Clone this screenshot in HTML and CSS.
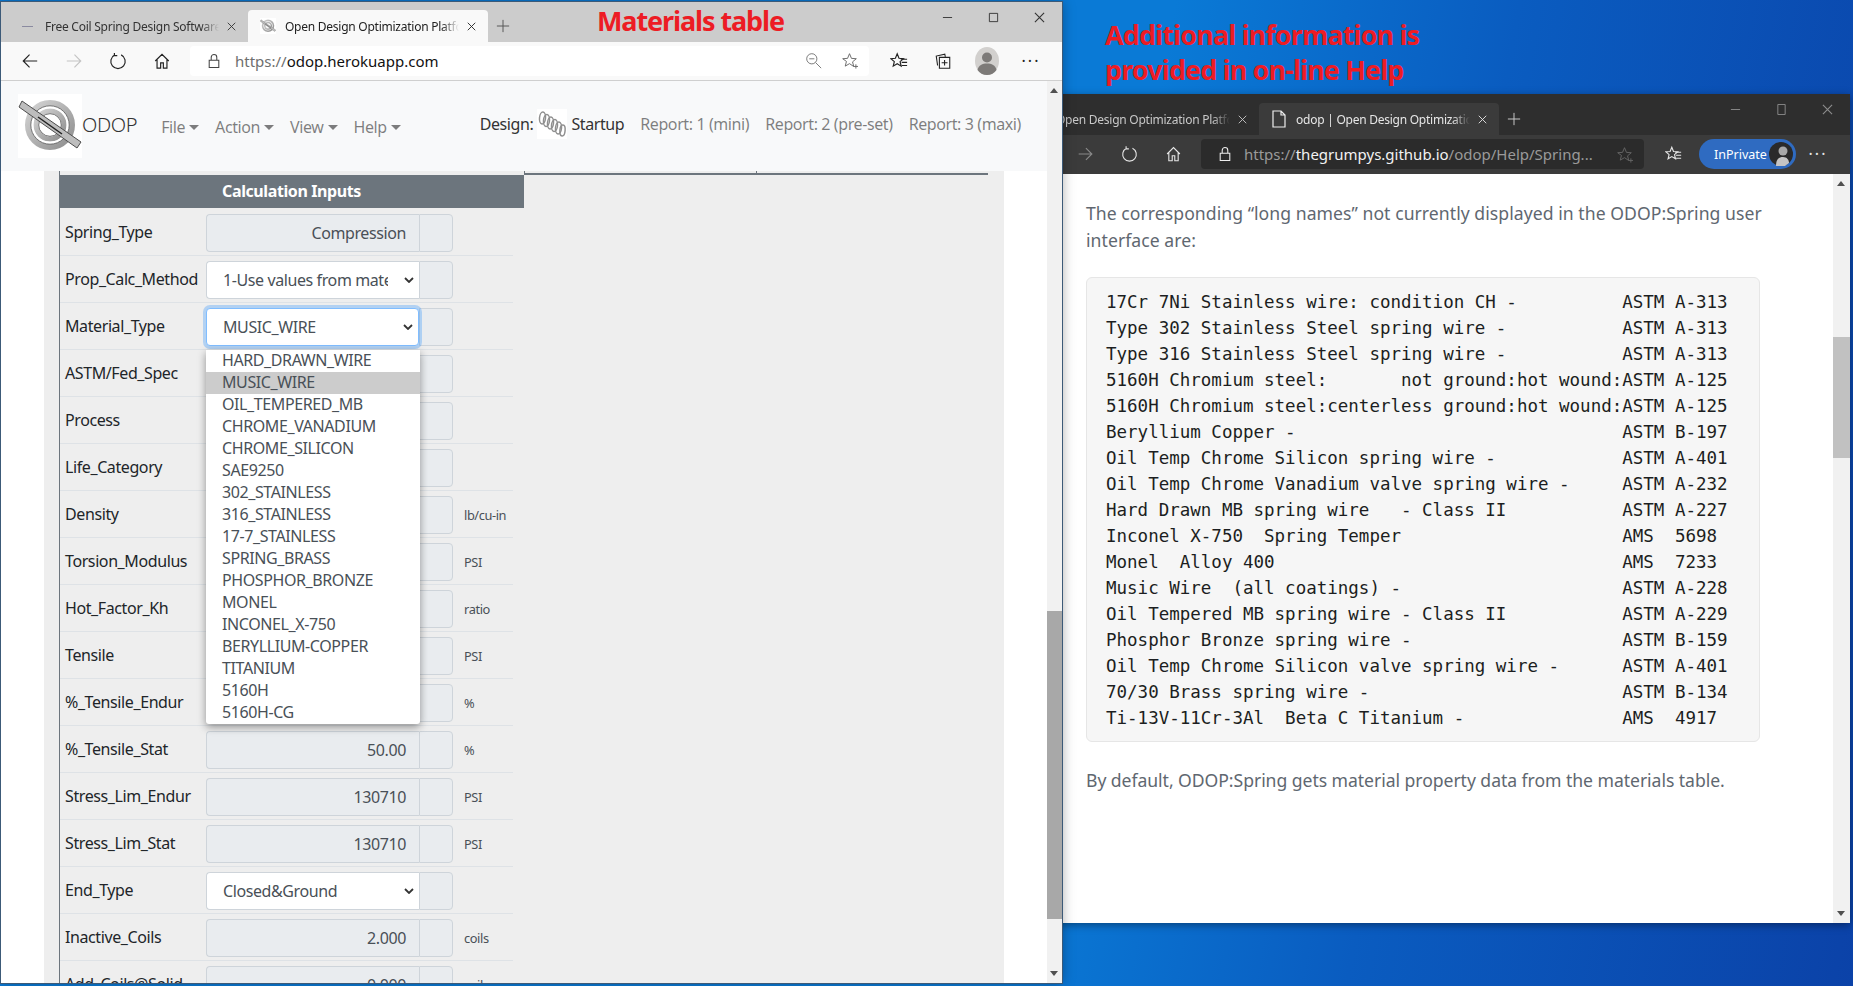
FILE: index.html
```html
<!DOCTYPE html>
<html lang="en">
<head>
  <meta charset="UTF-8">
  <title>Materials table</title>
  <link rel="stylesheet" href="styles.css">
</head>
<body>
  <svg class="sprite" width="0" height="0">
    <defs>
      <linearGradient id="ring" x1="0" y1="0" x2="1" y2="1">
        <stop offset="0" stop-color="#d4d4d4"/>
        <stop offset="1" stop-color="#8e8e8e"/>
      </linearGradient>
    </defs>
    <symbol id="i-back" viewBox="0 0 20 20"><path d="M18 10H2.5M9.5 3l-7 7 7 7" fill="none" stroke="currentColor" stroke-width="1.3"/></symbol>
    <symbol id="i-reload" viewBox="0 0 20 20"><path d="M6.5 3.2A8 8 0 1 0 13.5 3.2M6 1v3h3.2" fill="none" stroke="currentColor" stroke-width="1.3"/></symbol>
    <symbol id="i-home" viewBox="0 0 20 20"><path d="M2.5 10L10 2.5l7.500 7.500M4.500 8.500V18h4v-6h3v6h4V8.500" fill="none" stroke="currentColor" stroke-width="1.3"/></symbol>
    <symbol id="i-lock" viewBox="0 0 20 20"><path d="M4 9h12v9H4zM6.500 9V5.500a3.500 3.500 0 0 1 7 0V9" fill="none" stroke="currentColor" stroke-width="1.3"/></symbol>
    <symbol id="i-star" viewBox="0 0 20 20"><path d="M10 2l2.300 5.500 5.700.4-4.400 3.700 1.400 5.500L10 13.700 5 16.600l1.400-5.500L2 7.900l5.700-.4z" fill="none" stroke="currentColor" stroke-width="1.100"/><path d="M15 17h5M17.500 14.500v5" stroke="currentColor" stroke-width="1.100"/></symbol>
    <symbol id="i-favs" viewBox="0 0 20 20"><path d="M8 2l2 5 5 .4-3.800 3.300 1.200 5L8 13l-4.400 2.700 1.200-5L1 7.400 6 7z" fill="none" stroke="currentColor" stroke-width="1.300"/><path d="M12 8h7M13 11.500h6M13 15h6" stroke="currentColor" stroke-width="1.200"/></symbol>
    <symbol id="i-coll" viewBox="0 0 20 20"><path d="M4 15L2.500 4.500 12 2.500l.6 3" fill="none" stroke="currentColor" stroke-width="1.200"/><path d="M6 6h11.500v12H6zM11.750 9v6M8.500 12H15" fill="none" stroke="currentColor" stroke-width="1.200"/></symbol>
    <symbol id="i-zoom" viewBox="0 0 20 20"><circle cx="8" cy="8" r="6" fill="none" stroke="currentColor" stroke-width="1"/><path d="M12.500 12.500L19 19M5 8h6" stroke="currentColor" stroke-width="1"/></symbol>
    <symbol id="i-close" viewBox="0 0 12 12"><path d="M1 1l10 10M11 1L1 11" stroke="currentColor" stroke-width="1.200"/></symbol>
    <symbol id="i-plus" viewBox="0 0 16 16"><path d="M8 1v14M1 8h14" stroke="currentColor" stroke-width="1.100"/></symbol>
    <symbol id="i-chevron" viewBox="0 0 10 6"><path d="M1 1l4 4 4-4" fill="none" stroke="currentColor" stroke-width="1.800"/></symbol>
    <symbol id="i-coil" viewBox="0 0 30 30">
      <g fill="none" stroke="#8f8f8f" stroke-width="1.500">
        <ellipse cx="5.500" cy="9" rx="3" ry="6" transform="rotate(5 5.500 9)"/>
        <ellipse cx="9.500" cy="11.500" rx="3" ry="6" transform="rotate(5 9.500 11.500)"/>
        <ellipse cx="13.500" cy="14" rx="3" ry="6" transform="rotate(5 13.500 14)"/>
        <ellipse cx="17.500" cy="16.500" rx="3" ry="6" transform="rotate(5 17.500 16.500)"/>
        <ellipse cx="21.500" cy="19" rx="3" ry="6" transform="rotate(5 21.500 19)"/>
        <ellipse cx="25.500" cy="21.500" rx="2.600" ry="5.500" transform="rotate(5 25.500 21.500)"/>
      </g>
    </symbol>
    <symbol id="i-logo" viewBox="0 0 64 64">
      <rect width="64" height="64" fill="#fff"/>
      <circle cx="32" cy="31" r="22" fill="none" stroke="url(#ring)" stroke-width="6"/>
      <circle cx="32" cy="31" r="14" fill="none" stroke="url(#ring)" stroke-width="5"/>
      <circle cx="32" cy="31" r="18" fill="none" stroke="#fff" stroke-width="2.500"/>
      <circle cx="32" cy="31" r="19.200" fill="none" stroke="#555" stroke-width=".8"/>
      <circle cx="32" cy="31" r="11.300" fill="none" stroke="#555" stroke-width=".8"/>
      <path d="M4 7l59 41-4 6L1 13z" fill="#bdbdbd" stroke="#4d4d4d" stroke-width="1"/>
      <path d="M20 23l24 17" stroke="#222" stroke-width="1.500"/>
    </symbol>
  </svg>

  <div class="desktop">
    <div class="note note-table">Materials table</div>
    <div class="note note-help">Additional information is<br>provided in on-line Help</div>

    <!-- help window, sits behind the app window -->
    <div class="win win-help">
      <div class="tabstrip">
        <div class="tab">
          <span class="tab-icon"></span>
          <span class="tab-title">Open Design Optimization Platform</span>
          <svg class="tab-close"><use href="#i-close"/></svg>
        </div>
        <div class="tab tab-active">
          <svg class="tab-icon doc-icon" viewBox="0 0 14 18"><path d="M1 1h8l4 4v12H1zM9 1v4h4" fill="none" stroke="currentColor" stroke-width="1.200"/></svg>
          <span class="tab-title">odop | Open Design Optimization Platform</span>
          <svg class="tab-close"><use href="#i-close"/></svg>
        </div>
        <svg class="tab-plus"><use href="#i-plus"/></svg>
        <div class="win-controls">
          <span class="ctl"><svg viewBox="0 0 12 12"><path d="M1 6h10" stroke="currentColor"/></svg></span>
          <span class="ctl"><svg viewBox="0 0 12 12"><path d="M2 .5h8v11H2z" fill="none" stroke="currentColor"/></svg></span>
          <span class="ctl"><svg viewBox="0 0 12 12"><use href="#i-close"/></svg></span>
        </div>
      </div>
      <div class="toolbar">
        <span class="slot"><svg class="flip"><use href="#i-back"/></svg></span>
        <span class="slot dim"><svg class="flip"><use href="#i-back"/></svg></span>
        <span class="slot"><svg><use href="#i-reload"/></svg></span>
        <span class="slot"><svg><use href="#i-home"/></svg></span>
        <div class="address">
          <svg class="lock"><use href="#i-lock"/></svg>
          <span class="url"><i>https://</i>thegrumpys.github.io<i>/odop/Help/Spring...</i></span>
          <svg class="addr-icon"><use href="#i-star"/></svg>
        </div>
        <span class="slot"><svg><use href="#i-favs"/></svg></span>
        <div class="inprivate">
          <span>InPrivate</span>
          <svg class="avatar" viewBox="0 0 24 24">
            <circle cx="12" cy="12" r="12" fill="#2a2a2a"/>
            <circle cx="14" cy="9" r="4.500" fill="#a8a8a8"/>
            <path d="M7 24c0-7 3-9 7-9s6 3 6 6l-4 3z" fill="#c4c4c4"/>
          </svg>
        </div>
        <span class="slot more">···</span>
      </div>
      <div class="viewport">
        <div class="help-page">
          <p class="before-code">The corresponding “long names” not currently displayed in the ODOP:Spring user interface are:</p>
          <pre class="code">17Cr 7Ni Stainless wire: condition CH -          ASTM A-313
Type 302 Stainless Steel spring wire -           ASTM A-313
Type 316 Stainless Steel spring wire -           ASTM A-313
5160H Chromium steel:       not ground:hot wound:ASTM A-125
5160H Chromium steel:centerless ground:hot wound:ASTM A-125
Beryllium Copper -                               ASTM B-197
Oil Temp Chrome Silicon spring wire -            ASTM A-401
Oil Temp Chrome Vanadium valve spring wire -     ASTM A-232
Hard Drawn MB spring wire   - Class II           ASTM A-227
Inconel X-750  Spring Temper                     AMS  5698
Monel  Alloy 400                                 AMS  7233
Music Wire  (all coatings) -                     ASTM A-228
Oil Tempered MB spring wire - Class II           ASTM A-229
Phosphor Bronze spring wire -                    ASTM B-159
Oil Temp Chrome Silicon valve spring wire -      ASTM A-401
70/30 Brass spring wire -                        ASTM B-134
Ti-13V-11Cr-3Al  Beta C Titanium -               AMS  4917</pre>
          <p class="after-code">By default, ODOP:Spring gets material property data from the materials table.</p>
        </div>
        <div class="scrollbar scrollbar-help"><div class="thumb"></div></div>
      </div>
    </div>

    <!-- app window -->
    <div class="win win-app">
      <div class="tabstrip">
        <div class="tab">
          <span class="tab-icon"><span class="dash"></span></span>
          <span class="tab-title">Free Coil Spring Design Software</span>
          <svg class="tab-close"><use href="#i-close"/></svg>
        </div>
        <div class="tab tab-active">
          <svg class="tab-icon"><use href="#i-logo"/></svg>
          <span class="tab-title">Open Design Optimization Platform</span>
          <svg class="tab-close"><use href="#i-close"/></svg>
        </div>
        <svg class="tab-plus"><use href="#i-plus"/></svg>
        <div class="win-controls">
          <span class="ctl"><svg viewBox="0 0 12 12"><path d="M1 6h10" stroke="currentColor"/></svg></span>
          <span class="ctl"><svg viewBox="0 0 12 12"><path d="M1.500 1.500h9v9h-9z" fill="none" stroke="currentColor"/></svg></span>
          <span class="ctl"><svg viewBox="0 0 12 12"><use href="#i-close"/></svg></span>
        </div>
      </div>
      <div class="toolbar">
        <span class="slot"><svg><use href="#i-back"/></svg></span>
        <span class="slot dim"><svg class="flip"><use href="#i-back"/></svg></span>
        <span class="slot"><svg><use href="#i-reload"/></svg></span>
        <span class="slot"><svg><use href="#i-home"/></svg></span>
        <div class="address">
          <svg class="lock"><use href="#i-lock"/></svg>
          <span class="url"><i>https://</i>odop.herokuapp.com</span>
          <svg class="addr-icon addr-zoom"><use href="#i-zoom"/></svg>
          <svg class="addr-icon"><use href="#i-star"/></svg>
        </div>
        <span class="slot"><svg><use href="#i-favs"/></svg></span>
        <span class="slot"><svg><use href="#i-coll"/></svg></span>
        <span class="slot">
          <svg class="profile" viewBox="0 0 24 28">
            <ellipse cx="12" cy="14" rx="12" ry="14" fill="#d2d0ce"/>
            <circle cx="12" cy="10.500" r="5" fill="#7d7a78"/>
            <path d="M2.500 23c1-5 5-6.500 9.500-6.500s8.500 1.500 9.500 6.500c-2 3-5.500 5-9.500 5s-7.500-2-9.500-5z" fill="#7d7a78"/>
          </svg>
        </span>
        <span class="slot more">···</span>
      </div>
      <div class="viewport">
        <div class="app-page">
          <nav class="navbar">
            <svg class="logo"><use href="#i-logo"/></svg>
            <span class="brand">ODOP</span>
            <div class="nav-menus">
              <span class="nav-link caret">File</span>
              <span class="nav-link caret">Action</span>
              <span class="nav-link caret">View</span>
              <span class="nav-link caret">Help</span>
            </div>
            <div class="nav-right">
              <span class="design">Design:</span>
              <svg class="coil"><use href="#i-coil"/></svg>
              <span class="design">Startup</span>
              <span class="nav-link report report-first">Report: 1 (mini)</span>
              <span class="nav-link report">Report: 2 (pre-set)</span>
              <span class="nav-link report">Report: 3 (maxi)</span>
            </div>
          </nav>
          <div class="content">
            <div class="panels">
              <div class="inputs">
                <div class="inputs-head">Calculation Inputs</div>
                <div class="row"><span class="name">Spring_Type</span><div class="group"><div class="field ro">Compression</div><div class="append"></div></div></div>
                <div class="row"><span class="name">Prop_Calc_Method</span><div class="group"><div class="field sel"><span class="sel-text">1-Use values from material table</span><svg class="chev"><use href="#i-chevron"/></svg></div><div class="append"></div></div></div>
                <div class="row row-open"><span class="name">Material_Type</span><div class="group"><div class="field sel focus"><span class="sel-text">MUSIC_WIRE</span><svg class="chev"><use href="#i-chevron"/></svg></div><div class="append"></div></div>
                  <ul class="dropdown">
                    <li>HARD_DRAWN_WIRE</li>
                    <li class="picked">MUSIC_WIRE</li>
                    <li>OIL_TEMPERED_MB</li>
                    <li>CHROME_VANADIUM</li>
                    <li>CHROME_SILICON</li>
                    <li>SAE9250</li>
                    <li>302_STAINLESS</li>
                    <li>316_STAINLESS</li>
                    <li>17-7_STAINLESS</li>
                    <li>SPRING_BRASS</li>
                    <li>PHOSPHOR_BRONZE</li>
                    <li>MONEL</li>
                    <li>INCONEL_X-750</li>
                    <li>BERYLLIUM-COPPER</li>
                    <li>TITANIUM</li>
                    <li>5160H</li>
                    <li>5160H-CG</li>
                  </ul>
                </div>
                <div class="row"><span class="name">ASTM/Fed_Spec</span><div class="group"><div class="field ro"></div><div class="append"></div></div></div>
                <div class="row"><span class="name">Process</span><div class="group"><div class="field ro"></div><div class="append"></div></div></div>
                <div class="row"><span class="name">Life_Category</span><div class="group"><div class="field ro"></div><div class="append"></div></div></div>
                <div class="row"><span class="name">Density</span><div class="group"><div class="field ro"></div><div class="append"></div></div><span class="unit">lb/cu-in</span></div>
                <div class="row"><span class="name">Torsion_Modulus</span><div class="group"><div class="field ro"></div><div class="append"></div></div><span class="unit">PSI</span></div>
                <div class="row"><span class="name">Hot_Factor_Kh</span><div class="group"><div class="field ro"></div><div class="append"></div></div><span class="unit">ratio</span></div>
                <div class="row"><span class="name">Tensile</span><div class="group"><div class="field ro"></div><div class="append"></div></div><span class="unit">PSI</span></div>
                <div class="row"><span class="name">%_Tensile_Endur</span><div class="group"><div class="field ro"></div><div class="append"></div></div><span class="unit">%</span></div>
                <div class="row"><span class="name">%_Tensile_Stat</span><div class="group"><div class="field ro">50.00</div><div class="append"></div></div><span class="unit">%</span></div>
                <div class="row"><span class="name">Stress_Lim_Endur</span><div class="group"><div class="field ro">130710</div><div class="append"></div></div><span class="unit">PSI</span></div>
                <div class="row"><span class="name">Stress_Lim_Stat</span><div class="group"><div class="field ro">130710</div><div class="append"></div></div><span class="unit">PSI</span></div>
                <div class="row"><span class="name">End_Type</span><div class="group"><div class="field sel"><span class="sel-text">Closed&amp;Ground</span><svg class="chev"><use href="#i-chevron"/></svg></div><div class="append"></div></div></div>
                <div class="row"><span class="name">Inactive_Coils</span><div class="group"><div class="field ro">2.000</div><div class="append"></div></div><span class="unit">coils</span></div>
                <div class="row"><span class="name">Add_Coils@Solid</span><div class="group"><div class="field ro">0.000</div><div class="append"></div></div><span class="unit">coils</span></div>
              </div>
              <div class="panel-tops">
                <div class="panel-top"></div>
                <div class="panel-top"></div>
              </div>
            </div>
          </div>
        </div>
        <div class="scrollbar scrollbar-app"><div class="thumb"></div></div>
      </div>
    </div>
  </div>
</body>
</html>
```

FILE: styles.css
```css
* {
  box-sizing: border-box;
}
html, body {
  margin: 0;
  height: 100%;
  overflow: hidden;
}
body {
  font-family: "Noto Sans", "Open Sans", sans-serif;
  font-size: 16px;
  color: #212529;
}
.sprite {
  position: absolute;
}
.desktop {
  position: relative;
  width: 1853px;
  height: 986px;
  overflow: hidden;
  background: linear-gradient(100deg, #0a7ad6 0%, #0a7ad6 58%, #0a5cc0 75%, #0b42a8 100%);
}

/* red notes over the screenshot */
.note {
  position: absolute;
  z-index: 5;
  color: #ed1c24;
  font-weight: 700;
  font-size: 27px;
  letter-spacing: -0.9px;
  white-space: nowrap;
}
.note-table {
  left: 597px;
  top: 2px;
  letter-spacing: -1.1px;
}
.note-help {
  left: 1105px;
  top: 17px;
  line-height: 35px;
}

/* browser windows */
.win {
  position: absolute;
  display: flex;
  flex-direction: column;
  overflow: hidden;
}
.win-app {
  left: 1px;
  top: 2px;
  width: 1061px;
  height: 981px;
  z-index: 3;
  background: #fff;
  box-shadow: 0 0 12px rgba(0, 0, 0, .35);
  outline: 1px solid #3c5a78;
}
.win-help {
  left: 1000px;
  top: 94px;
  width: 850px;
  height: 829px;
  z-index: 2;
  background: #fff;
  box-shadow: 0 2px 8px rgba(0, 0, 0, .4);
}
.tabstrip {
  display: flex;
  align-items: flex-end;
  height: 40px;
  flex: none;
  padding-left: 7px;
  background: #cccccc;
  color: #333;
}
.win-help .tabstrip {
  height: 41px;
  padding-left: 19px;
  background: #2e2e2e;
  color: #c8c8c8;
}
.tab {
  display: flex;
  align-items: center;
  width: 240px;
  height: 32px;
  padding: 0 12px;
  border-radius: 4px 4px 0 0;
  font-size: 12px;
  letter-spacing: -0.25px;
}
.tab-active {
  background: #f9f9f9;
  color: #222;
}
.win-help .tab-active {
  background: #3b3b3b;
  color: #e6e6e6;
}
.tab-icon {
  display: flex;
  align-items: center;
  width: 16px;
  height: 16px;
  flex: none;
  margin-right: 9px;
}
.dash {
  width: 11px;
  height: 1px;
  margin-left: 2px;
  background: #8a8aa0;
}
.doc-icon {
  color: #eee;
  height: 18px;
}
.tab-title {
  flex: 1;
  overflow: hidden;
  white-space: nowrap;
  -webkit-mask-image: linear-gradient(90deg, #000 90%, transparent);
  mask-image: linear-gradient(90deg, #000 90%, transparent);
}
.tab-close {
  width: 9px;
  height: 9px;
  flex: none;
  margin-left: 8px;
}
.tab-plus {
  width: 14px;
  height: 14px;
  margin: 0 0 9px 8px;
  color: #555;
}
.win-help .tab-plus {
  color: #ccc;
}
.win-controls {
  display: flex;
  margin-left: auto;
  align-self: flex-start;
}
.ctl {
  display: flex;
  width: 46px;
  height: 30px;
  align-items: center;
  justify-content: center;
}
.ctl svg {
  width: 11px;
  height: 11px;
}
.win-help .ctl {
  color: #8d8d8d;
}
.toolbar {
  display: flex;
  align-items: center;
  flex: none;
  height: 39px;
  padding: 0 0 1px 7px;
  background: #f9f9f9;
  border-bottom: 1px solid #cfcfcf;
  color: #222;
}
.win-help .toolbar {
  height: 39px;
  padding-left: 19px;
  background: #3b3b3b;
  border-bottom: 0;
  color: #e6e6e6;
}
.slot {
  display: flex;
  width: 44px;
  height: 30px;
  flex: none;
  align-items: center;
  justify-content: center;
}
.slot svg {
  width: 18px;
  height: 18px;
}
.slot svg.flip {
  transform: scaleX(-1);
}
.win-help .slot svg {
  width: 17px;
  height: 20px;
}
.slot.dim {
  color: #c4c4c4;
}
.win-help .slot.dim {
  color: #8a8a8a;
}
.slot svg.profile {
  width: 24px;
  height: 28px;
}
.more {
  font-size: 16px;
  letter-spacing: 2px;
}
.address {
  display: flex;
  align-items: center;
  width: 679px;
  height: 30px;
  flex: none;
  margin: 0 8px 0 6px;
  padding-left: 16px;
  border-radius: 4px;
  background: #fff;
  font-size: 15px;
  color: #111;
}
.win-help .address {
  width: 443px;
  margin-right: 7px;
  background: #2b2b2b;
  color: #f2f2f2;
}
.lock {
  width: 16px;
  height: 18px;
  flex: none;
  margin-right: 13px;
  color: #444;
}
.win-help .lock {
  color: #eee;
  margin-right: 11px;
}
.url {
  flex: 1;
  white-space: nowrap;
  overflow: hidden;
}
.url i {
  font-style: normal;
  color: #6e6e6e;
}
.win-help .url i {
  color: #9a9a9a;
}
.addr-icon {
  width: 17px;
  height: 17px;
  flex: none;
  margin-right: 11px;
  color: #666;
}
.addr-zoom {
  margin-right: 19px;
}
.inprivate {
  display: flex;
  align-items: center;
  justify-content: space-between;
  width: 97px;
  height: 30px;
  flex: none;
  margin-left: 4px;
  padding: 0 3px 0 15px;
  border-radius: 15px;
  background: #2f6bc1;
  color: #fff;
  font-size: 12.500px;
}
.avatar {
  width: 24px;
  height: 24px;
}
.viewport {
  display: flex;
  flex: 1;
  min-height: 0;
}
.scrollbar {
  position: relative;
  flex: none;
  width: 15px;
  background: #f1f1f1;
}
.scrollbar::before,
.scrollbar::after {
  content: "";
  position: absolute;
  left: 3px;
  border-left: 4px solid transparent;
  border-right: 4px solid transparent;
}
.scrollbar::before {
  top: 7px;
  border-bottom: 5px solid #505050;
}
.scrollbar::after {
  bottom: 7px;
  border-top: 5px solid #505050;
}
.thumb {
  background: #a8a8a8;
}
.scrollbar-app .thumb {
  height: 308px;
  margin-top: 530px;
}
.scrollbar-help {
  width: 17px;
}
.scrollbar-help::before,
.scrollbar-help::after {
  left: 4px;
}
.scrollbar-help .thumb {
  height: 121px;
  margin-top: 163px;
  background: #c1c1c1;
}

/* ODOP app page */
.app-page {
  flex: 1;
  min-width: 0;
  overflow: hidden;
  background: #fff;
  letter-spacing: -0.4px;
}
.navbar {
  display: flex;
  align-items: center;
  height: 90px;
  padding: 0 18px 4px 17px;
  background: #f8f9fa;
}
.logo {
  width: 64px;
  height: 64px;
  flex: none;
  margin-top: 4px;
}
.brand {
  font-size: 20px;
  font-weight: 300;
  color: #333;
  margin-right: 16px;
}
.nav-menus {
  display: flex;
  margin-top: 6px;
}
.nav-link {
  padding: 0 8px;
  color: rgba(0, 0, 0, .5);
}
.caret::after {
  content: "";
  display: inline-block;
  margin-left: 4px;
  vertical-align: 3px;
  border-top: 5px solid;
  border-left: 5px solid transparent;
  border-right: 5px solid transparent;
}
.nav-right {
  display: flex;
  align-items: center;
  margin-left: auto;
}
.design {
  color: #333;
}
.coil {
  width: 30px;
  height: 30px;
  margin: 0 4px;
  background: #fff;
}
.report-first {
  margin-left: 8px;
}
.content {
  width: 960px;
  height: 900px;
  margin-left: 43px;
  padding-left: 15px;
  background: #eeeeee;
}
.panels {
  display: flex;
}
.inputs {
  width: 465px;
  flex: none;
  border-left: 1px solid #6c757d;
}
.inputs-head {
  height: 33px;
  margin: 4px 0 1px -1px;
  background: #6c757d;
  color: #fff;
  font-weight: 700;
  text-align: center;
  line-height: 32px;
}
.row {
  position: relative;
  display: flex;
  align-items: flex-start;
  height: 47px;
  width: 453px;
  padding-top: 5px;
  border-bottom: 1px solid #dee2e6;
}
.name {
  width: 146px;
  flex: none;
  padding: 6px 0 0 5px;
  white-space: nowrap;
  line-height: 24px;
}
.group {
  display: flex;
  width: 247px;
  height: 38px;
  flex: none;
}
.field {
  width: 213px;
  height: 38px;
  flex: none;
  border: 1px solid #ced4da;
  border-right: 0;
  border-radius: 4px 0 0 4px;
  color: #495057;
  line-height: 37px;
}
.ro {
  padding-right: 13px;
  background: #e9ecef;
  text-align: right;
}
.sel {
  display: flex;
  align-items: center;
  padding-left: 16px;
  background: #fff;
}
.sel-text {
  flex: 1;
  min-width: 0;
  overflow: hidden;
  white-space: nowrap;
  margin-right: 16px;
}
.chev {
  width: 10px;
  height: 6px;
  flex: none;
  margin-right: 5px;
  color: #333;
}
.focus {
  position: relative;
  z-index: 1;
  border: 1px solid #80bdff;
  border-radius: 4px;
  box-shadow: 0 0 0 3px rgba(0, 123, 255, .25);
}
.append {
  flex: 1;
  background: #e9ecef;
  border: 1px solid #ced4da;
  border-radius: 0 4px 4px 0;
}
.unit {
  padding: 7px 0 0 11px;
  font-size: 12.800px;
  line-height: 24px;
  color: #495057;
  white-space: nowrap;
}
.dropdown {
  position: absolute;
  z-index: 2;
  left: 146px;
  top: 47px;
  width: 214px;
  margin: 0;
  padding: 0;
  list-style: none;
  background: #fff;
  color: #495057;
  border-radius: 0 0 3px 3px;
  box-shadow: 0 3px 8px rgba(0, 0, 0, .4);
}
.dropdown li {
  height: 22px;
  padding-left: 16px;
  line-height: 20px;
  white-space: nowrap;
}
.dropdown .picked {
  background: #cccccc;
}
.panel-tops {
  display: flex;
  flex: none;
}
.panel-top {
  width: 232px;
  height: 4px;
  border-bottom: 2px solid #6c757d;
  border-left: 1px solid #6c757d;
}

/* help page */
.help-page {
  flex: 1;
  min-width: 0;
  padding: 26px 0 0 86px;
  color: #606770;
  font-size: 17.600px;
  line-height: 27px;
}
.help-page p {
  width: 690px;
  margin: 0;
}
.help-page .before-code {
  letter-spacing: .05px;
}
.code {
  width: 674px;
  height: 465px;
  margin: 23px 0 0;
  padding: 11px 0 0 19px;
  overflow: hidden;
  background: #f6f6f6;
  border: 1px solid #e6e6e6;
  border-radius: 6px;
  color: #1c1e21;
  font-family: "DejaVu Sans Mono", "Liberation Mono", monospace;
  font-size: 17.500px;
  line-height: 26px;
}
.help-page .after-code {
  margin-top: 25px;
  letter-spacing: -0.05px;
}
```
